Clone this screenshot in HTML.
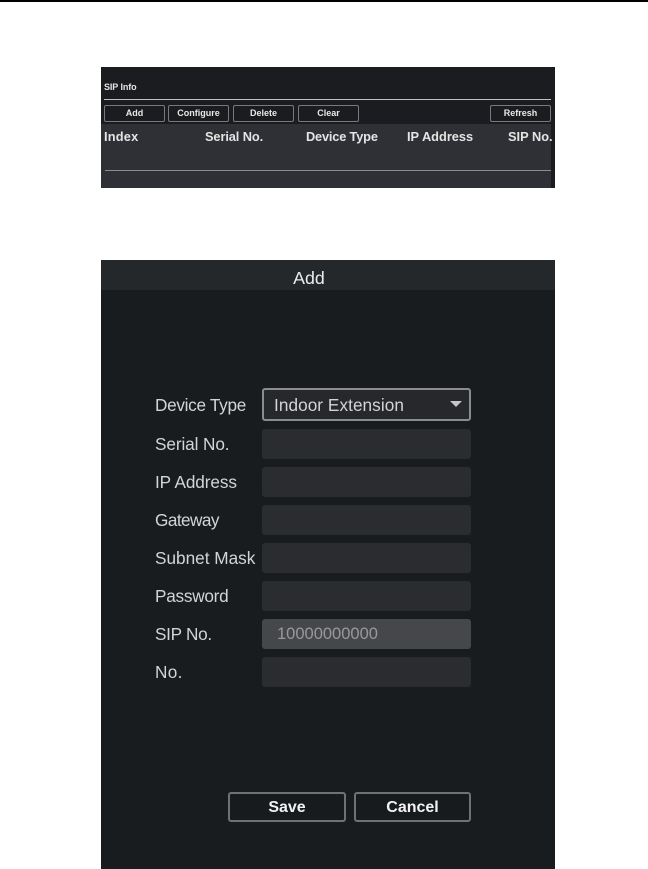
<!DOCTYPE html>
<html><head><meta charset="utf-8"><style>
html,body{margin:0;padding:0;background:#fff}
body{position:relative;width:648px;height:869px;overflow:hidden;font-family:"Liberation Sans",sans-serif}
div{position:absolute;box-sizing:border-box;white-space:nowrap}
.b{top:105px;height:17px;width:61px;border:1px solid #77797b;border-radius:2px;color:#e8e8e8;font-size:9px;font-weight:bold;text-align:center;line-height:15px}
.th{top:129px;color:#e4e4e4;font-size:12.8px;font-weight:bold;line-height:16px}
.l{left:155px;color:#d4d4d4;font-size:17.2px;line-height:20px}
.i{left:262px;width:209px;height:30px;background:#2a2c30;border-radius:3px}
.s{top:792px;height:30px;border:2px solid #6f7173;border-radius:3px;color:#f2f2f2;font-size:16px;font-weight:bold;text-align:center;line-height:27px;background:#181b1e}
</style></head><body>
<div style="left:0;top:0;width:648px;height:2px;background:#000"></div>

<div style="left:101px;top:67px;width:454px;height:121px;background:#1a1c1f"></div>
<div style="left:104px;top:81px;color:#e4e4e4;font-size:9px;font-weight:bold;line-height:12px;letter-spacing:-.1px">SIP Info</div>
<div style="left:104px;top:99px;width:447px;height:1px;background:#c0c0c0"></div>
<div class="b" style="left:104px">Add</div>
<div class="b" style="left:168px">Configure</div>
<div class="b" style="left:233px">Delete</div>
<div class="b" style="left:298px">Clear</div>
<div class="b" style="left:490px">Refresh</div>
<div style="left:101px;top:124px;width:450px;height:64px;background:#2e3035"></div>
<div class="th" style="left:104px;letter-spacing:.2px">Index</div>
<div class="th" style="left:205px;letter-spacing:-.1px">Serial No.</div>
<div class="th" style="left:306px;letter-spacing:-.18px">Device Type</div>
<div class="th" style="left:407px">IP Address</div>
<div class="th" style="left:508px;width:44px;overflow:hidden">SIP No.</div>
<div style="left:105px;top:170px;width:446px;height:1px;background:#8a8c8e"></div>

<div style="left:101px;top:260px;width:454px;height:609px;background:#191c1f"></div>
<div style="left:101px;top:260px;width:454px;height:30px;background:#25282b;color:#ececec;font-size:17.8px;text-align:center;line-height:36px"><span style="position:relative;top:0px;left:-19px">Add</span></div>

<div class="l" style="top:395px;letter-spacing:-.3px">Device Type</div>
<div class="i" style="top:388px;height:33px;border:2px solid #8a8c8e;background:#26282c"></div>
<div style="left:274px;top:395px;color:#d4d4d4;font-size:17.2px;line-height:20px;letter-spacing:.06px">Indoor Extension</div>
<svg style="position:absolute;left:449px;top:400px" width="14" height="8"><path d="M1 1H13L7 7Z" fill="#c4c4c4"/></svg>

<div class="l" style="top:434px;letter-spacing:-.1px">Serial No.</div><div class="i" style="top:429px"></div>
<div class="l" style="top:472px;letter-spacing:-.1px">IP Address</div><div class="i" style="top:467px"></div>
<div class="l" style="top:510px;letter-spacing:-.55px">Gateway</div><div class="i" style="top:505px"></div>
<div class="l" style="top:548px">Subnet Mask</div><div class="i" style="top:543px"></div>
<div class="l" style="top:586px;letter-spacing:-.25px">Password</div><div class="i" style="top:581px"></div>
<div class="l" style="top:624px;letter-spacing:-.3px">SIP No.</div><div class="i" style="top:619px;background:#45474b"></div>
<div style="left:277px;top:624px;color:#97999b;font-size:16.5px;line-height:20px">10000000000</div>
<div class="l" style="top:662px;letter-spacing:.3px">No.</div><div class="i" style="top:657px"></div>

<div class="s" style="left:228px;width:118px">Save</div>
<div class="s" style="left:354px;width:117px">Cancel</div>
</body></html>
